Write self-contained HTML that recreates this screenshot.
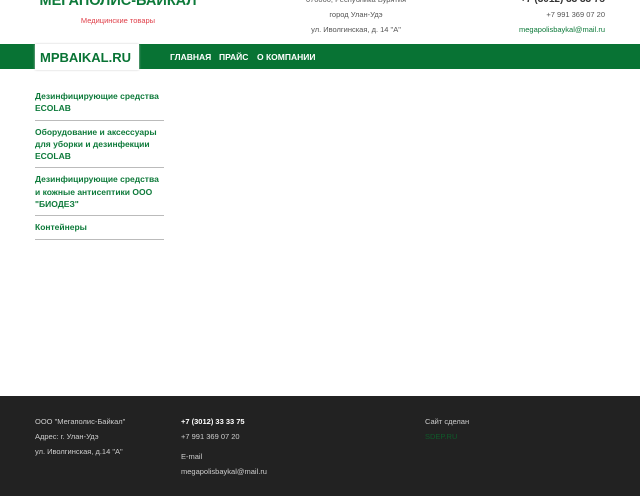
<!DOCTYPE html>
<html><head><meta charset="utf-8"><style>
*{margin:0;padding:0;box-sizing:border-box}
body{width:640px;height:496px;background:#fff;font-family:"Liberation Sans",Arial,sans-serif;position:relative;overflow:hidden}
.a{position:absolute;white-space:nowrap}
.title{left:18px;top:-7px;width:200px;text-align:center;font-weight:bold;font-size:14.5px;color:#0d7a3a}
.sub{left:38px;top:16px;width:160px;text-align:center;font-size:7.5px;color:#e0404a}
.c{left:296px;width:120px;text-align:center;font-size:7.5px;color:#555}
.r{right:35px;text-align:right;font-size:7.5px;color:#555}
.bar{left:0;top:44px;width:640px;height:25px;background:#087334}
.logo{left:35px;top:44px;width:104px;height:26px;background:#fff;box-shadow:0 0 2px #ccc;font-weight:bold;font-size:13px;color:#087334;padding:6px 0 0 5px}
.nav{top:52px;font-size:8.5px;font-weight:bold;color:#fff}
.side{position:absolute;left:35px;top:90px;width:129px}
.side div{border-bottom:1px solid #bbb;font-size:8.5px;font-weight:bold;color:#0d7a3a;line-height:12.3px;padding:0 0 5px 0;margin-bottom:5px;white-space:nowrap}
.foot{left:0;top:396px;width:640px;height:100px;background:#222}
.f{font-size:7.5px;color:#ccc}
</style></head><body>
<div class="a title">"МЕГАПОЛИС-БАЙКАЛ"</div>
<div class="a sub">Медицинские товары</div>
<div class="a c" style="top:-5px">670000, Республика Бурятия</div>
<div class="a c" style="top:10px">город Улан-Удэ</div>
<div class="a c" style="top:25px">ул. Иволгинская, д. 14 "А"</div>
<div class="a r" style="top:-6px;font-size:10px;font-weight:bold;color:#333">+7 (3012) 33 33 75</div>
<div class="a r" style="top:10px">+7 991 369 07 20</div>
<div class="a r" style="top:25px;color:#0d7a3a">megapolisbaykal@mail.ru</div>
<div class="a bar"></div>
<div class="a logo">MPBAIKAL.RU</div>
<div class="a nav" style="left:170px">ГЛАВНАЯ</div>
<div class="a nav" style="left:219px">ПРАЙС</div>
<div class="a nav" style="left:257px">О КОМПАНИИ</div>
<div class="side">
<div>Дезинфицирующие средства<br>ECOLAB</div>
<div>Оборудование и аксессуары<br>для уборки и дезинфекции<br>ECOLAB</div>
<div>Дезинфицирующие средства<br>и кожные антисептики ООО<br>"БИОДЕЗ"</div>
<div>Контейнеры</div>
</div>
<div class="a foot"></div>
<div class="a f" style="left:35px;top:417px">ООО "Мегаполис-Байкал"</div>
<div class="a f" style="left:35px;top:432px">Адрес: г. Улан-Удэ</div>
<div class="a f" style="left:35px;top:447px">ул. Иволгинская, д.14 "А"</div>
<div class="a f" style="left:181px;top:417px;color:#fff;font-weight:bold">+7 (3012) 33 33 75</div>
<div class="a f" style="left:181px;top:432px">+7 991 369 07 20</div>
<div class="a f" style="left:181px;top:452px">E-mail</div>
<div class="a f" style="left:181px;top:467px">megapolisbaykal@mail.ru</div>
<div class="a f" style="left:425px;top:417px">Сайт сделан</div>
<div class="a f" style="left:425px;top:432px;color:#0f5a2a">SDEP.RU</div>
</body></html>
